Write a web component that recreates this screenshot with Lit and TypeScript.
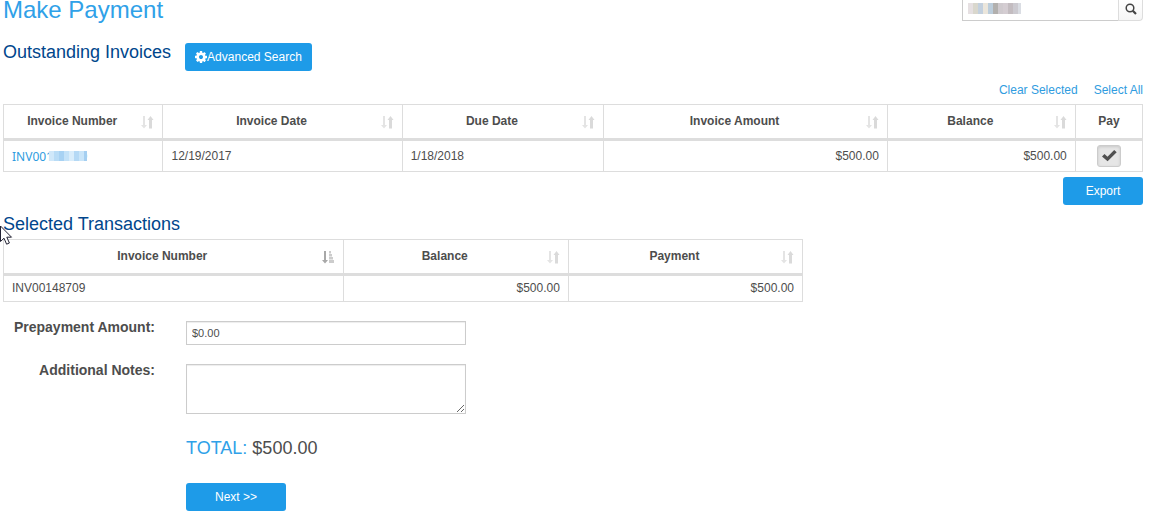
import { LitElement, html, svg, css } from "lit";
import { customElement, property, state } from "lit/decorators.js";

/* A strip of flat colour tiles that stands over private text. */
const tiles = (colors: string[], w: number, h: number) =>
  svg`${colors.map((c, x) => svg`<rect x=${x * w} y="0" width=${w} height=${h} fill=${c}></rect>`)}`;

@customElement("sort-icon")
class SortIcon extends LitElement {
  @property() order = "none";
  static styles = css`
    :host { display: block; width: 14px; height: 14px; }
    svg { display: block; }
  `;
  render() {
    return this.order === "asc"
      ? html`<svg width="14" height="14" viewBox="0 0 14 14" aria-hidden="true">
          <path fill="#a8a8a8" d="M2 1h2v9h2l-3 3.500L0 10h2z"></path>
          <path fill="#ccc" d="M7 1h2v2.500H7zM7 4h3v2.500H7zM7 7h4v2.500H7zM7 10h5v3H7z"></path></svg>`
      : html`<svg width="14" height="14" viewBox="0 0 14 14" aria-hidden="true">
          <path fill="#e4e4e4" d="M2 1h2v9h2l-3 3.500L0 10h2z"></path>
          <path fill="#dadada" d="M8 13.500h3V5h1.500L9.500 1l-3 4H8z"></path></svg>`;
  }
}

@customElement("app-root")
class AppRoot extends LitElement {
  @state() paid = true;

  static styles = css`
    :host { display: block; font: 12px/16px "Liberation Sans", Arial, sans-serif; color: #4d4d4d; }
    * { box-sizing: border-box; }
    main { position: relative; padding: 0 16px 10px 3px; }
    h1, h2 { margin: 0; font-weight: 400; }
    h1 { font-size: 24px; line-height: 20px; color: #2fa1e8; }
    h2 { font-size: 18px; line-height: 18px; color: #00468c; }
    a { color: #2f9ce0; text-decoration: none; }
    button, input, textarea { font-family: inherit; color: inherit; margin: 0; }
    .top { display: flex; justify-content: space-between; align-items: flex-start; }
    .search { display: flex; width: 181px; height: 21px; }
    .field { position: relative; flex: 1; display: flex; min-width: 0; }
    .field input { width: 100%; border: 1px solid #ccc; border-width: 0 0 1px 1px; padding: 0 5px; outline: 0; }
    .field svg { position: absolute; left: 6px; top: 3px; }
    .search button { width: 25px; padding: 0 0 3px; border: 1px solid #ddd; border-top: 0; border-radius: 0 0 4px 0;
      background: linear-gradient(#fff, #f6f6f6); display: grid; place-items: center; }
    .bar { display: flex; align-items: flex-start; gap: 14px; margin-top: 22px; }
    .btn { display: inline-flex; align-items: center; justify-content: center; height: 28px; border: 0; border-radius: 3px;
      background: #1e9be8; color: #fff; font-size: 12px; padding: 0 10px; }
    .links { display: flex; justify-content: flex-end; gap: 16px; margin: 11px 0 6px; }
    table { width: 100%; table-layout: fixed; border-collapse: separate; border-spacing: 0; border-right: 1px solid #ddd; }
    th, td { border-left: 1px solid #ddd; border-bottom: 1px solid #ddd; }
    th { position: relative; border-top: 1px solid #ddd; border-bottom-width: 3px; padding: 8px 30px 9px 8px; }
    th.plain { padding: 8px 8px 9px; }
    th sort-icon { position: absolute; right: 7px; top: 10px; }
    td { padding: 4px 8px; line-height: 17px; }
    .num { text-align: right; }
    .inv { width: 14%; } .date { width: 21%; } .due { width: 17.7%; } .amt { width: 24.9%; } .bal { width: 16.5%; }
    .w1 { width: 42.5%; } .w2 { width: 28.2%; }
    .code { position: relative; display: block; font-family: "Noto Sans", sans-serif; }
    .code svg { position: absolute; left: 37px; top: 3px; }
    .pay { text-align: center; }
    .tick { position: relative; display: grid; width: 24px; height: 22px; margin: 0 auto; }
    .tick input { appearance: none; width: 24px; height: 22px; border: 1px solid #ccc; border-radius: 3px;
      background: #e6e6e6; box-shadow: inset 0 1px 3px #0002; }
    .tick svg { position: absolute; left: 5px; top: 4px; pointer-events: none; }
    .right { display: flex; justify-content: flex-end; margin: 5px 0 10px; }
    .export { width: 80px; }
    .chosen { max-width: 800px; margin-top: 6px; }
    form { display: grid; grid-template-columns: 152px minmax(0, 280px); column-gap: 31px; row-gap: 15px; margin-top: 15px; }
    label { font-size: 14px; line-height: 20px; font-weight: 700; text-align: right; }
    .box { display: block; width: 100%; margin-top: 4px; border: 1px solid #ccc; border-radius: 0; padding: 2px 5px;
      background: #fff; font-size: 11px; box-shadow: inset 0 1px 1px #00000013; }
    input.box { height: 24px; }
    textarea.box { height: 50px; }
    .total, .next { grid-column: 2; }
    .total { margin-top: 9px; font-size: 18px; line-height: 20px; }
    .total span { color: #2fa1e8; }
    .next { width: 100px; margin-top: 10px; }
    .cursor { position: absolute; left: 0; top: 225px; }
  `;

  head(name: string, cls: string, order = "none") {
    return html`<th class=${cls} scope="col">${name}<sort-icon order=${order}></sort-icon></th>`;
  }

  render() {
    return html`<main>
      <div class="top">
        <h1>Make Payment</h1>
        <div class="search">
          <div class="field"><input type="text" aria-label="Search" />
            <svg width="53" height="11" shape-rendering="crispEdges" aria-hidden="true">${tiles(
              ["#e6e0e2", "#d9d7cd", "#c3d0de", "#ebe6dc", "#bccddb", "#b2b0ae", "#cfcace", "#d4cdd2", "#c3bcc0", "#cccad0", "#dadde3"], 5, 11)}</svg>
          </div>
          <button type="button" aria-label="Find">
            <svg width="12" height="12" viewBox="0 0 12 12" fill="none" stroke="#444" aria-hidden="true">
              <circle cx="5" cy="5" r="3.800" stroke-width="1.500"></circle><path d="M7.800 7.800L11 11" stroke-width="2.200"></path></svg>
          </button>
        </div>
      </div>
      <div class="bar">
        <h2>Outstanding Invoices</h2>
        <button class="btn" type="button"><svg width="12" height="12" viewBox="128 128 1536 1536" fill="#fff" aria-hidden="true"><path d="M1152 896q0-106-75-181t-181-75-181 75-75 181 75 181 181 75 181-75 75-181zm512-109v222q0 12-8 23t-20 13l-185 28q-19 54-39 91 35 50 107 138 10 12 10 25t-9 23q-27 37-99 108t-94 71q-12 0-26-9l-138-108q-44 23-91 38-16 136-29 186-7 28-36 28h-222q-14 0-24.500-8.500t-11.500-21.500l-28-184q-49-16-90-37l-141 107q-10 9-25 9-14 0-25-11-126-114-165-168-7-10-7-23 0-12 8-23 15-21 51-66.500t54-70.500q-27-50-41-99l-183-27q-13-2-21-12.500t-8-23.500v-222q0-12 8-23t19-13l186-28q14-46 39-92-40-57-107-138-10-12-10-24 0-10 9-23 26-36 98.500-107.500t94.500-71.500q13 0 26 10l138 107q44-23 91-38 16-136 29-186 7-28 36-28h222q14 0 24.500 8.500t11.500 21.500l28 184q49 16 90 37l142-107q9-9 24-9 13 0 25 10 129 119 165 170 7 8 7 22 0 12-8 23-15 21-51 66.500t-54 70.500q26 50 41 98l183 28q13 2 21 12.500t8 23.500z"></path></svg>Advanced Search</button>
      </div>
      <div class="links"><a href="#clear">Clear Selected</a><a href="#all">Select All</a></div>
      <table>
        <thead><tr>
          ${this.head("Invoice Number", "inv")}${this.head("Invoice Date", "date")}${this.head("Due Date", "due")}
          ${this.head("Invoice Amount", "amt")}${this.head("Balance", "bal")}<th class="plain" scope="col">Pay</th>
        </tr></thead>
        <tbody><tr>
          <td><a class="code" href="#invoice">INV00148709<svg width="38" height="11" shape-rendering="crispEdges" aria-hidden="true">
            <rect width="38" height="11" fill="#fff"></rect>${tiles(
              ["#d0e8fa", "#b9dcf6", "#a8d2f3", "#c4e2f8", "#d9edfb", "#b5d9f5", "#c9e5f9", "#a5cff1"], 5, 10)}</svg></a></td>
          <td>12/19/2017</td><td>1/18/2018</td><td class="num">$500.00</td><td class="num">$500.00</td>
          <td class="pay"><span class="tick">
            <input type="checkbox" aria-label="Pay" .checked=${this.paid}
              @change=${(e: Event) => (this.paid = (e.target as HTMLInputElement).checked)} />
            ${this.paid ? html`<svg width="15" height="13" viewBox="0 0 15 13" aria-hidden="true"><path fill="#505050" d="M0 7.500L2.500 5l3 2.800L12.200 1 14.700 3.300 5.600 12.300z"></path></svg>` : ""}
          </span></td>
        </tr></tbody>
      </table>
      <div class="right"><button class="btn export" type="button">Export</button></div>
      <h2>Selected Transactions</h2>
      <table class="chosen">
        <thead><tr>${this.head("Invoice Number", "w1", "asc")}${this.head("Balance", "w2")}${this.head("Payment", "")}</tr></thead>
        <tbody><tr><td>INV00148709</td><td class="num">$500.00</td><td class="num">$500.00</td></tr></tbody>
      </table>
      <form @submit=${(e: Event) => e.preventDefault()}>
        <label for="pre">Prepayment Amount:</label><input class="box" id="pre" type="text" value="$0.00" />
        <label for="notes">Additional Notes:</label><textarea class="box" id="notes"></textarea>
        <div class="total"><span>TOTAL:</span> $500.00</div>
        <button class="btn next" type="submit">Next &gt;&gt;</button>
      </form>
      <svg class="cursor" width="13" height="21" viewBox="0 0 13 21" aria-hidden="true">
        <path d="M.500 1v15.500l3.500-3.300 2.600 6 2.800-1.200-2.600-5.800h4.700z" fill="#fff" stroke="#223"></path></svg>
    </main>`;
  }
}
